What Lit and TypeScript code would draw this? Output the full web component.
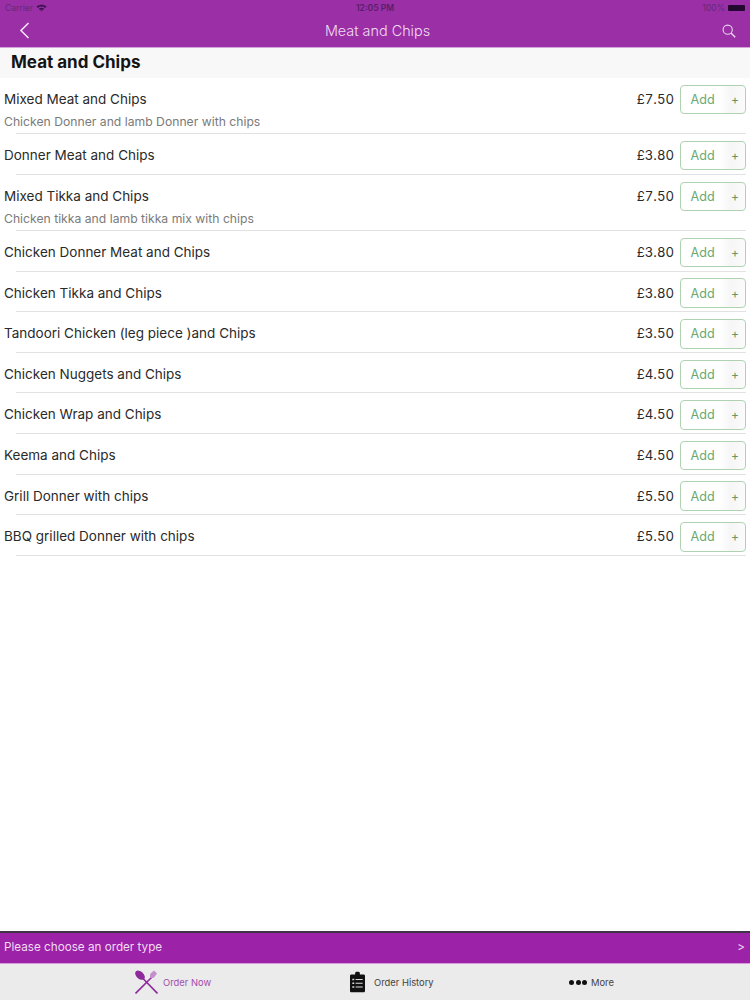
import { LitElement, html, css, svg } from "lit";
import { customElement } from "lit/decorators.js";

const items: { name: string; price: string; desc?: string }[] = [
  { name: "Mixed Meat and Chips", price: "£7.50", desc: "Chicken Donner and lamb Donner with chips" },
  { name: "Donner Meat and Chips", price: "£3.80" },
  { name: "Mixed Tikka and Chips", price: "£7.50", desc: "Chicken tikka and lamb tikka mix with chips" },
  { name: "Chicken Donner Meat and Chips", price: "£3.80" },
  { name: "Chicken Tikka and Chips", price: "£3.80" },
  { name: "Tandoori Chicken (leg piece )and Chips", price: "£3.50" },
  { name: "Chicken Nuggets and Chips", price: "£4.50" },
  { name: "Chicken Wrap and Chips", price: "£4.50" },
  { name: "Keema and Chips", price: "£4.50" },
  { name: "Grill Donner with chips", price: "£5.50" },
  { name: "BBQ grilled Donner with chips", price: "£5.50" },
];

@customElement("app-root")
export class AppRoot extends LitElement {
  static styles = css`
    :host {
      display: flex;
      flex-direction: column;
      width: 750px;
      height: 1000px;
      background: #fff;
      font-family: "Inter", "Liberation Sans", sans-serif;
      color: #222;
      overflow: hidden;
    }
    .nav {
      height: 48px;
      flex: none;
      background: #9a2fa6;
      border-bottom: 1px solid #d3a6d9;
      box-sizing: border-box;
      display: flex;
      flex-direction: column;
    }
    .status {
      height: 15px;
      display: flex;
      align-items: center;
      justify-content: space-between;
      padding: 0 5px 0 5px;
      font-size: 8.5px;
      color: #642a78;
      position: relative;
    }
    .status .left, .status .right { display: flex; align-items: center; gap: 3px; }
    .status .time { font-weight: 600; color: #57206a; position: absolute; left: 356px; }
    .batt { width: 17px; height: 6px; background: #24082f; border-radius: 1px; }
    .bar {
      flex: 1;
      display: flex;
      align-items: center;
      justify-content: space-between;
      padding: 0 14px 1px 19px;
      color: #f1dcf3;
      font-size: 14.4px;
      font-weight: 300;
    }
    .bar .title { margin-left: 3px; }
    .bar svg { display: block; }
    .heading {
      height: 30px;
      flex: none;
      background: #f8f8f8;
      display: flex;
      align-items: center;
      padding: 0 0 3px 11px;
      box-sizing: border-box;
      font-size: 17px;
      font-weight: 700;
      color: #141414;
    }
    .list { flex: 1; }
    .row {
      height: 40.62px;
      box-sizing: border-box;
      padding-left: 4px;
      display: flex;
      position: relative;
    }
    .row.tall { height: 56.2px; }
    .row::after {
      content: "";
      position: absolute;
      left: 16px;
      right: 4px;
      bottom: 0;
      height: 1px;
      background: #e2e2e2;
    }
    .text { flex: 1; padding-top: 13px; }
    .name { font-size: 13.5px; line-height: 17px; color: #2a2a2a; }
    .desc { font-size: 12.2px; line-height: 15px; margin-top: 6px; color: #7a7a7a; }
    .price {
      font-size: 13.2px;
      line-height: 17px;
      padding-top: 13px;
      margin-right: 6px;
      color: #2a2a2a;
      width: 38px;
      text-align: right;
      font-feature-settings: "tnum";
    }
    .add {
      width: 66px;
      height: 29.5px;
      margin: 6.8px 4px 0 0;
      box-sizing: border-box;
      border: 1.5px solid #afd3b1;
      border-radius: 4px;
      display: flex;
      align-items: center;
      justify-content: space-between;
      padding: 0 6px 0 9.5px;
      color: #69a96f;
      font-size: 12.6px;
      background: linear-gradient(90deg, #fff 60%, #f5f6f5 78%, #fbfbfb 100%);
    }
    .plus { font-size: 12px; color: #5f9a64; }
    .order {
      height: 33px;
      flex: none;
      box-sizing: border-box;
      background: #9c22a8;
      border-top: 2px solid #3f3346;
      border-bottom: 1px solid #d79adc;
      display: flex;
      align-items: center;
      justify-content: space-between;
      padding: 0 5px 2px 4px;
      color: #f0dcf2;
      font-size: 11.7px;
    }
    .tabs {
      height: 36px;
      flex: none;
      background: #ebebeb;
      display: grid;
      grid-template-columns: repeat(3, 250px);
      font-size: 9.4px;
      color: #444;
    }
    .tab { display: flex; align-items: center; gap: 5px; }
    .tab.one { padding-left: 135px; color: #a24cae; }
    .tab.two { padding-left: 100px; gap: 9px; }
    .tab.three { padding-left: 69px; gap: 4px; }
    .dots { display: flex; gap: 1.5px; }
    .dots i { width: 5px; height: 5px; border-radius: 50%; background: #111; display: block; }
  `;

  private row(i: { name: string; price: string; desc?: string }) {
    return html`<div class="row ${i.desc ? "tall" : ""}">
      <div class="text">
        <div class="name">${i.name}</div>
        ${i.desc ? html`<div class="desc">${i.desc}</div>` : ""}
      </div>
      <div class="price">${i.price}</div>
      <div class="add"><span>Add</span><span class="plus">+</span></div>
    </div>`;
  }

  render() {
    return html`
      <div class="nav">
        <div class="status">
          <div class="left">Carrier
            <svg width="11" height="8" viewBox="0 0 11 8">${svg`<path d="M0.5 2.6C3.5 0 7.5 0 10.5 2.6L9.2 3.9C6.9 2 4.1 2 1.8 3.9zM2.8 4.8C4.5 3.4 6.5 3.4 8.2 4.8L7 6C6 5.2 5 5.2 4 6zM4.6 6.6C5.2 6.1 5.8 6.1 6.4 6.6L5.5 7.6z" fill="#3c1250"/>`}</svg>
          </div>
          <div class="time">12:05 PM</div>
          <div class="right">100% <div class="batt"></div></div>
        </div>
        <div class="bar">
          <svg width="11" height="17" viewBox="0 0 11 17">${svg`<path d="M9.5 1L2 8.5L9.5 16" fill="none" stroke="#f3e3f5" stroke-width="1.6"/>`}</svg>
          <span class="title">Meat and Chips</span>
          <svg width="14" height="14" viewBox="0 0 14 14">${svg`<circle cx="5.7" cy="5.7" r="4.6" fill="none" stroke="#ecd6ef" stroke-width="1.1"/><path d="M9 9L13.2 13.2" stroke="#ecd6ef" stroke-width="1.5"/>`}</svg>
        </div>
      </div>
      <div class="heading">Meat and Chips</div>
      <div class="list">${items.map((i) => this.row(i))}</div>
      <div class="order"><span>Please choose an order type</span><span>&gt;</span></div>
      <div class="tabs">
        <div class="tab one">
          <svg width="23" height="24" viewBox="0 0 23 24">${svg`
            <ellipse cx="5" cy="5.2" rx="5.6" ry="3.6" transform="rotate(42 5 5.2)" fill="#8e2a9c"/>
            <path d="M7 7.5L22.5 23.5" stroke="#8e2a9c" stroke-width="1.6"/>
            <path d="M16.5 7.5L0.5 23.5" stroke="#8e2a9c" stroke-width="1.6"/>
            <path d="M15.5 3.5L19 0.5L22 3.5L19 7.5C17.6 8.2 16 8.2 15.3 7.6C14.8 6.6 14.8 4.8 15.5 3.5z" fill="#c58fce"/>
          `}</svg>
          <span>Order Now</span>
        </div>
        <div class="tab two">
          <svg width="15" height="22" viewBox="0 0 16 22">${svg`
            <path d="M1.5 3H5.5V1.5C5.5 0.5 6.5 0 8 0S10.5 0.5 10.5 1.5V3H14.5C15.3 3 16 3.6 16 4.4V20.5C16 21.3 15.3 22 14.5 22H1.5C0.7 22 0 21.3 0 20.5V4.4C0 3.6 0.7 3 1.5 3z" fill="#111"/>
            <path d="M2.5 7.5h2v1.6h-2zM6 7.7h7.5v1.1H6zM2.5 11.5h2v1.6h-2zM6 11.7h7.5v1.1H6zM2.5 15.5h2v1.6h-2zM6 15.7h7.5v1.1H6z" fill="#ddd"/>
          `}</svg>
          <span>Order History</span>
        </div>
        <div class="tab three">
          <div class="dots"><i></i><i></i><i></i></div>
          <span>More</span>
        </div>
      </div>
    `;
  }
}
